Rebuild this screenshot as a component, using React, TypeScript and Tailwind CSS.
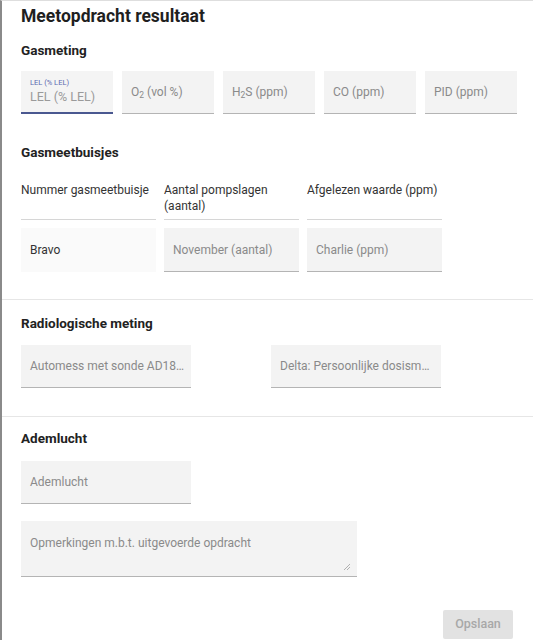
import React from 'react';

// Meetopdracht resultaat formulier
const gasFields = [
  { key: 'o2', label: <>O<sub className="text-[8.5px]">2</sub> (vol %)</> },
  { key: 'h2s', label: <>H<sub className="text-[8.5px]">2</sub>S (ppm)</> },
  { key: 'co', label: <>CO (ppm)</> },
  { key: 'pid', label: <>PID (ppm)</> },
];

function Field({ text, className = '' }: { text: React.ReactNode; className?: string }) {
  return (
    <div
      className={`flex h-[43px] items-center border-b-[1.5px] border-[#b4b4b4] bg-[#f3f3f3] px-[9px] text-[12px] text-[#8a8a8a] ${className}`}
    >
      <span className="whitespace-nowrap">{text}</span>
    </div>
  );
}

export default function App() {
  return (
    <div className="h-[640px] w-[533px] overflow-hidden border-l-2 border-t border-l-[#8a8a8a] border-t-[#dedede] bg-white font-['Roboto',sans-serif] text-[#222]">
      {/* Gasmeting + Gasmeetbuisjes */}
      <div className="pl-[19px] pt-[3px] pb-[27px]">
        <h2 className="text-[17.5px] font-bold leading-6 text-[#1f1f1f]">Meetopdracht resultaat</h2>

        <h3 className="mt-[12px] text-[13.5px] font-bold leading-5">Gasmeting</h3>
        <div className="mt-[11px] flex gap-[9px]">
          <div className="flex h-[43px] w-[92px] flex-col justify-center border-b-2 border-[#4a5890] bg-[#f4f4f4] px-[9px]">
            <span className="text-[7.5px] leading-[9px] text-[#5a69b0]">LEL (% LEL)</span>
            <span className="mt-[2px] text-[12.5px] leading-4 text-[#9a9a9a]">LEL (% LEL)</span>
          </div>
          {gasFields.map((f) => (
            <Field key={f.key} text={f.label} className="w-[92px]" />
          ))}
        </div>

        <h3 className="mt-[28px] text-[13.5px] font-bold leading-5">Gasmeetbuisjes</h3>
        <div className="mt-[20px] grid w-[421px] grid-cols-3 gap-x-[8px] text-[12px] leading-4 text-[#333]">
          <div className="h-[38px] border-b border-[#d6d6d6]">Nummer gasmeetbuisje</div>
          <div className="h-[38px] border-b border-[#d6d6d6]">Aantal pompslagen (aantal)</div>
          <div className="h-[38px] border-b border-[#d6d6d6]">Afgelezen waarde (ppm)</div>
        </div>
        <div className="mt-[8px] grid w-[421px] grid-cols-3 gap-x-[8px]">
          <div className="flex h-[44px] items-center bg-[#fafafa] px-[9px] text-[12px] text-[#333]">Bravo</div>
          <Field text="November (aantal)" className="h-[44px]" />
          <Field text="Charlie (ppm)" className="h-[44px]" />
        </div>
      </div>

      <div className="h-px bg-[#e6e6e6]" />

      {/* Radiologische meting */}
      <div className="pl-[19px] pt-[13px] pb-[28px]">
        <h3 className="text-[13.5px] font-bold leading-5">Radiologische meting</h3>
        <div className="mt-[12px] flex gap-[80px]">
          <Field text="Automess met sonde AD18…" className="h-[42px] w-[170px] text-[11.5px]" />
          <Field text="Delta: Persoonlijke dosism…" className="h-[42px] w-[170px] text-[11.5px]" />
        </div>
      </div>

      <div className="h-px bg-[#e6e6e6]" />

      {/* Ademlucht */}
      <div className="pl-[19px] pr-[20px] pt-[11px]">
        <h3 className="text-[13.5px] font-bold leading-5">Ademlucht</h3>
        <Field text="Ademlucht" className="mt-[13px] h-[42px] w-[170px]" />
        <div className="relative mt-[17px] w-[336px]">
          <textarea
            placeholder="Opmerkingen m.b.t. uitgevoerde opdracht"
            className="block h-[56px] w-full resize-none border-b-[1.5px] border-[#b4b4b4] bg-[#f3f3f3] px-[9px] pt-[14px] text-[12px] leading-4 text-[#333] outline-none placeholder:text-[#8a8a8a]"
          />
          {/* resize handle */}
          <svg className="pointer-events-none absolute bottom-[6px] right-[6px]" width="8" height="8" viewBox="0 0 8 8">
            <path d="M7 1 L1 7 M7 4 L4 7" stroke="#b0b0b0" strokeWidth="1" />
          </svg>
        </div>
        <div className="mt-[33px] flex justify-end">
          <button className="h-[29px] w-[70px] rounded-[2px] bg-[#e2e2e2] text-[12.5px] font-medium text-[#a8a8a8]">
            Opslaan
          </button>
        </div>
      </div>
    </div>
  );
}
